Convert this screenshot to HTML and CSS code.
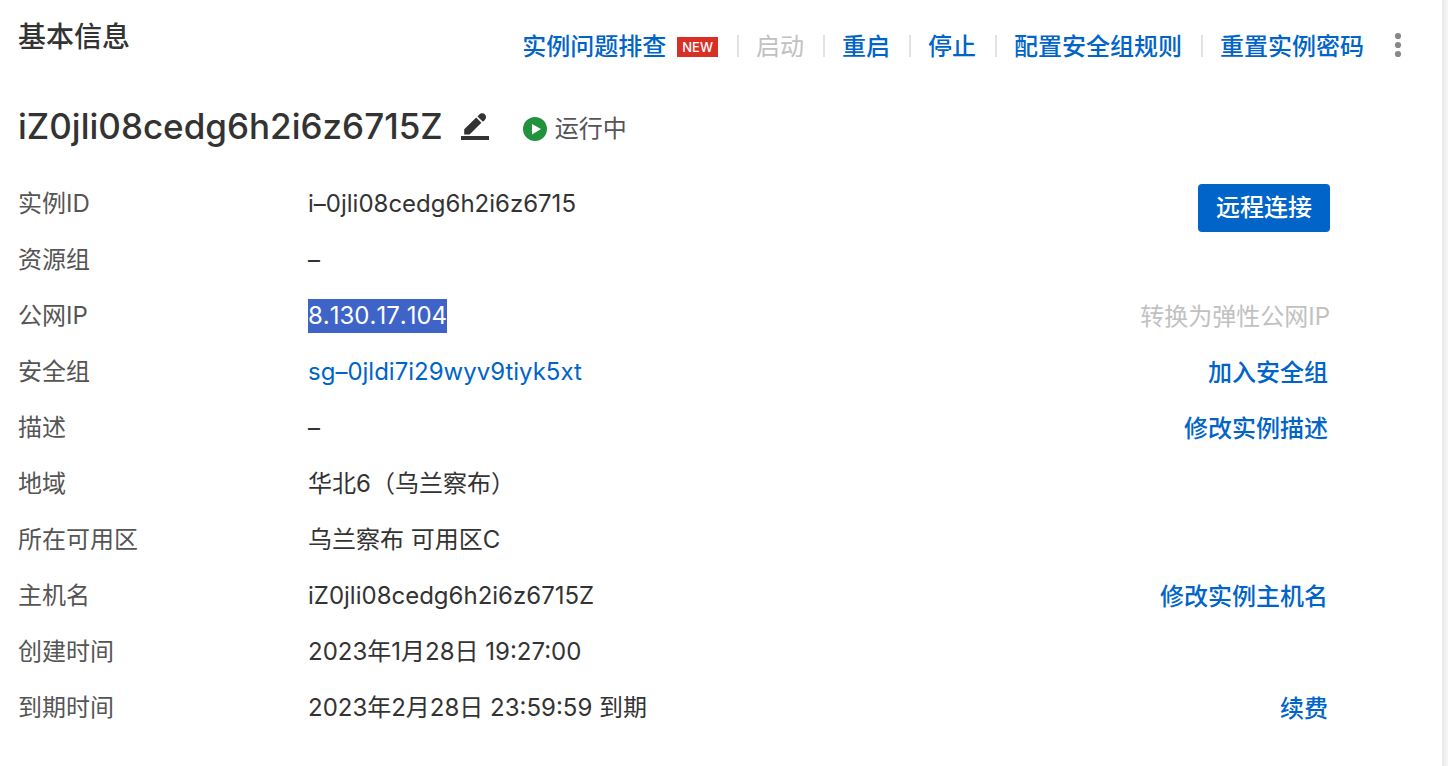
FILE: index.html
```
<!DOCTYPE html>
<html lang="zh-CN">
<head>
<meta charset="UTF-8" />
<meta name="viewport" content="width=device-width, initial-scale=1" />
<title>基本信息</title>
<link rel="stylesheet" href="styles.css">
</head>
<body>
  <main class="panel">
    <header class="panel-header">
      <h1>基本信息</h1>
      <nav class="toolbar">
        <a href="#" class="has-badge">实例问题排查<span class="badge">NEW</span></a>
        <button class="link-btn" disabled>启动</button>
        <a href="#">重启</a>
        <a href="#">停止</a>
        <a href="#">配置安全组规则</a>
        <a href="#">重置实例密码</a>
      </nav>
      <button class="icon-btn" aria-label="更多操作">
        <svg width="8" height="26" viewBox="0 0 8 26" fill="#888"><circle cx="4" cy="4" r="3.1"/><circle cx="4" cy="13" r="3.1"/><circle cx="4" cy="22" r="3.1"/></svg>
      </button>
    </header>

    <div class="instance">
      <h2>iZ0jli08cedg6h2i6z6715Z</h2>
      <button class="icon-btn" aria-label="修改实例名称">
        <svg width="28" height="28" viewBox="0 0 28 28" fill="#333"><path d="M0 24h28v4H0zM3.200 22.500v-5.200L15.200 5.600l5.200 5.200L8.600 22.500zM16.500 4.400l1.600-1.600c1.900-1.900 4.500-1.800 5.900-.4s1.500 4-.4 5.900L21.900 9.800z"/></svg>
      </button>
      <span class="status">
        <svg width="24" height="24" viewBox="0 0 24 24"><circle cx="12" cy="12" r="12" fill="#23923d"/><path d="M9 7l9 5-9 5.500z" fill="#fff"/></svg>
        运行中
      </span>
    </div>

    <table class="info">
      <tr>
        <th scope="row">实例ID</th>
        <td>i–0jli08cedg6h2i6z6715</td>
        <td class="action"><button class="btn-primary">远程连接</button></td>
      </tr>
      <tr>
        <th scope="row">资源组</th>
        <td>–</td>
        <td class="action"></td>
      </tr>
      <tr>
        <th scope="row">公网IP</th>
        <td><span class="selected">8.130.17.104</span></td>
        <td class="action"><button class="link-btn" disabled>转换为弹性公网IP</button></td>
      </tr>
      <tr>
        <th scope="row">安全组</th>
        <td><a href="#">sg–0jldi7i29wyv9tiyk5xt</a></td>
        <td class="action"><a href="#">加入安全组</a></td>
      </tr>
      <tr>
        <th scope="row">描述</th>
        <td>–</td>
        <td class="action"><a href="#">修改实例描述</a></td>
      </tr>
      <tr>
        <th scope="row">地域</th>
        <td>华北6（乌兰察布）</td>
        <td class="action"></td>
      </tr>
      <tr>
        <th scope="row">所在可用区</th>
        <td>乌兰察布 可用区C</td>
        <td class="action"></td>
      </tr>
      <tr>
        <th scope="row">主机名</th>
        <td>iZ0jli08cedg6h2i6z6715Z</td>
        <td class="action"><a href="#">修改实例主机名</a></td>
      </tr>
      <tr>
        <th scope="row">创建时间</th>
        <td>2023年1月28日 19:27:00</td>
        <td class="action"></td>
      </tr>
      <tr>
        <th scope="row">到期时间</th>
        <td>2023年2月28日 23:59:59 到期</td>
        <td class="action"><a href="#">续费</a></td>
      </tr>
    </table>
  </main>
</body>
</html>
```
FILE: styles.css
```
* { box-sizing: border-box; }
body {
  margin: 0;
  padding-right: 6px;
  min-height: 100vh;
  display: flex;
  background: linear-gradient(to left, #f7f7f7, #e9e9e9 6px);
  font-family: Inter, "Noto Sans CJK SC", sans-serif;
  font-size: 24px;
  line-height: 34px;
  color: #333;
}
.panel {
  flex: 1;
  padding: 18px 40px 24px 18px;
  background: #fff;
}
h1, h2 {
  margin: 0;
  font-weight: 500;
}
a {
  color: #0064c8;
  text-decoration: none;
}
a:hover { text-decoration: underline; }
button {
  padding: 0;
  border: 0;
  background: none;
  font: inherit;
  cursor: pointer;
}
.link-btn:disabled {
  color: #c1c1c1;
  font-weight: 400;
  cursor: default;
}
.icon-btn { display: flex; }

.panel-header {
  display: flex;
  align-items: flex-start;
}
h1 {
  margin-right: auto;
  font-size: 28px;
  line-height: 38px;
}
.toolbar {
  display: flex;
  padding-top: 12px;
  font-weight: 500;
}
.toolbar > * {
  position: relative;
  line-height: 34px;
}
.toolbar > * + * {
  margin-left: 19px;
  padding-left: 19px;
}
/* divider between actions */
.toolbar > * + *::before {
  content: "";
  position: absolute;
  left: 0;
  top: 5px;
  width: 2px;
  height: 22px;
  background: #e3e3e3;
}
.has-badge {
  display: flex;
  align-items: center;
  gap: 11px;
}
.badge {
  padding: 0 5px;
  background: #d93026;
  color: #fff;
  font-size: 13px;
  line-height: 20px;
}
.panel-header .icon-btn { margin: 14px 0 0 30px; }

.instance {
  display: flex;
  align-items: center;
  margin-top: 38px;
}
h2 {
  font-size: 35px;
  line-height: 48px;
}
.instance .icon-btn { margin-left: 18px; }
.status {
  display: flex;
  align-items: center;
  gap: 8px;
  margin-left: 34px;
  padding-top: 6px;
  color: #555;
}

.info {
  width: 100%;
  margin-top: 26px;
  border-collapse: collapse;
}
.info tr { height: 56px; }
.info th, .info td {
  padding: 0;
  text-align: left;
}
.info th {
  width: 290px;
  color: #555;
  font-weight: 400;
}
.info .action {
  padding: 2px 72px 0 0;
  text-align: right;
  font-weight: 500;
}
.action a { padding-right: 2px; }
.selected {
  display: inline-block;
  background: #3e64c8;
  color: #fff;
  font-kerning: none;
}
.btn-primary {
  display: block;
  height: 48px;
  margin: 6px 0 0 auto;
  padding: 0 18px;
  border-radius: 4px;
  background: #0064c8;
  color: #fff;
}
```
